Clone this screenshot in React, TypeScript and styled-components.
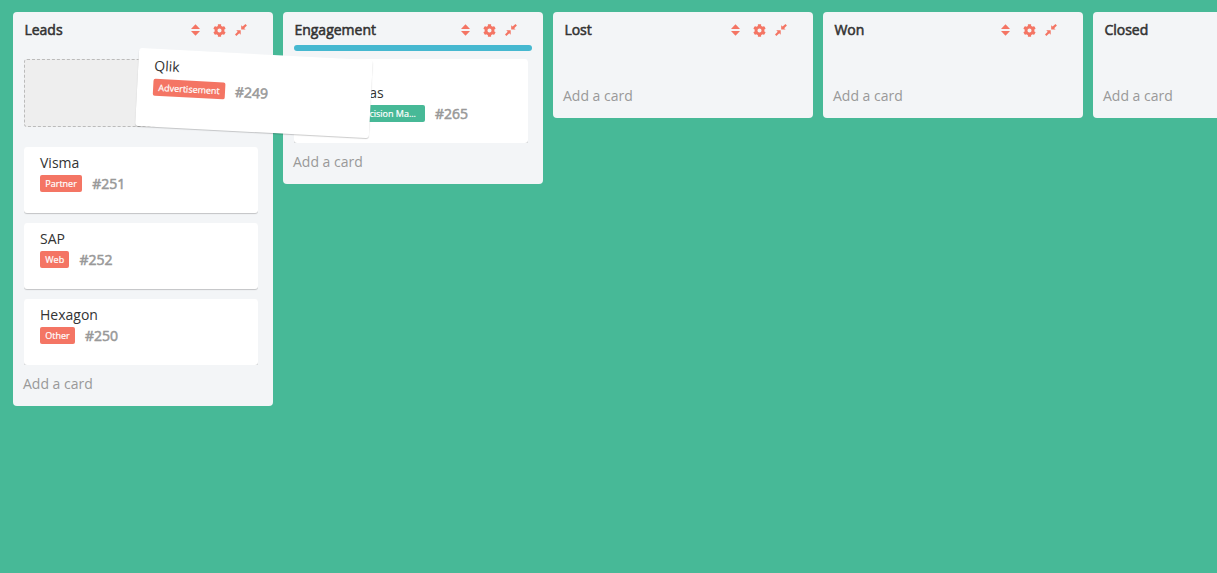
import React from "react";
import styled, { createGlobalStyle, css } from "styled-components";
import { FaCog } from "react-icons/fa";

const GlobalStyle = createGlobalStyle`
  * { box-sizing: border-box; }
  html, body { margin: 0; height: 100%; overflow: hidden; }
  body {
    background: #47b997;
    font-family: "Open Sans", sans-serif;
    font-size: 14px;
    line-height: 20px;
    color: #333;
  }
`;

const Board = styled.main`
  position: relative;
  display: flex;
  align-items: flex-start;
  gap: 10px;
  width: 100%;
  min-height: 573px;
  padding: 12px 13px;
  overflow: hidden;
`;

const Column = styled.section`
  flex: none;
  width: 260px;
  padding: 0 11px 12px;
  border-radius: 4px;
  background: #f3f5f7;
`;

const ColumnHeader = styled.header`
  display: flex;
  align-items: center;
  height: 33px;
  padding: 3px 15px 0 0;
`;

const ColumnTitle = styled.h2`
  flex: 1;
  margin: 0;
  padding-left: 0.4px;
  font-size: 14px;
  font-weight: 400;
  -webkit-text-stroke: 0.55px currentColor;
`;

const Tools = styled.div`
  display: flex;
  align-items: center;
  color: #f47564;
  svg { display: block; }
`;

const SortIcon = styled.svg`
  margin-right: 13px;
`;

const GearIcon = styled(FaCog)`
  margin-right: 9px;
`;

const DropBar = styled.div<{ $active?: boolean }>`
  height: 6px;
  border-radius: 3px;
  background: ${(p) => (p.$active ? "#46b8d0" : "transparent")};
`;

const CardList = styled.div`
  display: flex;
  flex-direction: column;
  gap: 10px;
  width: 234px;
  min-height: 18px;
  margin-top: 8px;
  overflow: hidden;
`;

const Placeholder = styled.div`
  height: 68px;
  margin-bottom: 10px;
  border: 1px dashed #bbb;
  border-radius: 3px;
  background: #eee;
`;

const CardTitle = styled.div`
  height: 22px;
  white-space: nowrap;
`;

const dragged = css`
  position: absolute;
  left: 137px;
  top: 54px;
  width: 234px;
  height: 78px;
  padding-top: 7px;
  transform: rotate(3deg);
  ${CardTitle} { height: 23px; }
`;

const CardBox = styled.article<{ $tall?: boolean; $dragged?: boolean }>`
  flex: none;
  height: ${(p) => (p.$tall ? 84 : 66)}px;
  padding: ${(p) => (p.$tall ? 24 : 6)}px 16px 0;
  border-radius: 3px;
  background: #fff;
  box-shadow: 0 1px 1px rgba(0, 0, 0, 0.2);
  ${(p) => p.$dragged && dragged}
`;

const CardMeta = styled.div`
  display: flex;
  align-items: center;
  gap: 10px;
  height: 17px;
`;

const Tag = styled.span<{ $green?: boolean }>`
  height: 17px;
  padding: 0 5.3px;
  border-radius: 2px;
  background: ${(p) => (p.$green ? "#47b997" : "#f47564")};
  color: #fff;
  font-size: 9px;
  -webkit-text-stroke: 0.2px currentColor;
  line-height: 17px;
  white-space: nowrap;
  ${(p) => p.$green && "width: 115px; padding-right: 9px; text-align: right;"}
`;

const CardNumber = styled.span`
  color: #999;
  -webkit-text-stroke: 0.55px currentColor;
`;

const AddCard = styled.div`
  margin: 9px 0 0 -1px;
  color: #999;
`;

type CardData = { title: string; tag: string; num: string; green?: boolean };

const Card = ({ card, isDragged }: { card: CardData; isDragged?: boolean }) => (
  <CardBox $tall={card.green} $dragged={isDragged}>
    <CardTitle>{card.title}</CardTitle>
    <CardMeta>
      <Tag $green={card.green}>{card.tag}</Tag>
      <CardNumber>{card.num}</CardNumber>
    </CardMeta>
  </CardBox>
);

const columns: { title: string; dragSource?: boolean; dropTarget?: boolean; cards: CardData[] }[] = [
  {
    title: "Leads",
    dragSource: true,
    cards: [
      { title: "Visma", tag: "Partner", num: "#251" },
      { title: "SAP", tag: "Web", num: "#252" },
      { title: "Hexagon", tag: "Other", num: "#250" },
    ],
  },
  {
    title: "Engagement",
    dropTarget: true,
    cards: [{ title: "Nortea Gas", tag: "Decision Ma...", num: "#265", green: true }],
  },
  { title: "Lost", cards: [] },
  { title: "Won", cards: [] },
  { title: "Closed", cards: [] },
];

export default function App() {
  return (
    <>
      <GlobalStyle />
      <Board>
        {columns.map((col) => (
          <Column key={col.title}>
            <ColumnHeader>
              <ColumnTitle>{col.title}</ColumnTitle>
              <Tools>
                <SortIcon width="10" height="12" viewBox="0 0 10 12" fill="currentColor">
                  <path d="M5.5.3 10 5H1zM1 7h9L5.5 11.7z" />
                </SortIcon>
                <GearIcon size={13} />
                <svg width="12" height="12" viewBox="0 0 12 12" fill="currentColor">
                  <path d="M6.2 1.2 7.6 2.6 10.5 0 11.9 1.4 9.2 4.2 10.6 5.6H6.2zM1.3 6.3H5.7V10.7L4.3 9.3 1.4 12 0 10.6 2.7 7.7z" />
                </svg>
              </Tools>
            </ColumnHeader>
            <DropBar $active={col.dropTarget} />
            <CardList>
              {col.dragSource && <Placeholder />}
              {col.cards.map((c) => (
                <Card key={c.num} card={c} />
              ))}
            </CardList>
            <AddCard>Add a card</AddCard>
          </Column>
        ))}
        <Card card={{ title: "Qlik", tag: "Advertisement", num: "#249" }} isDragged />
      </Board>
    </>
  );
}
